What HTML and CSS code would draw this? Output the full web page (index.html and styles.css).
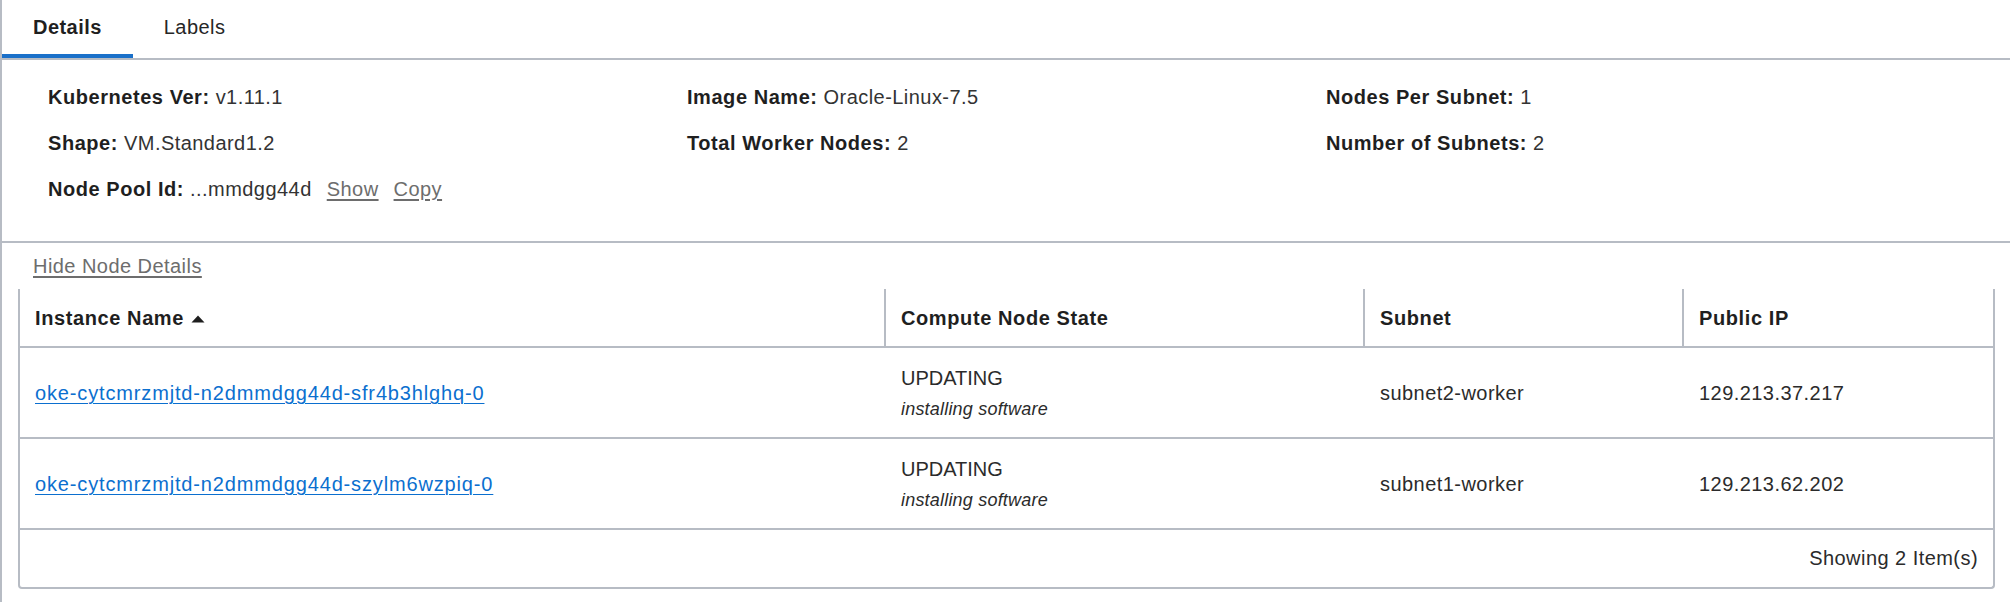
FILE: index.html
```html
<!DOCTYPE html>
<html lang="en">
<head>
<meta charset="utf-8">
<title>Node Pool Details</title>
<link rel="stylesheet" href="styles.css">
</head>
<body>
<div class="panel">
  <div class="tabs">
    <div class="tab tab-active">Details</div>
    <div class="tab">Labels</div>
  </div>

  <div class="details">
    <div class="field"><span class="label">Kubernetes Ver:</span> v1.11.1</div>
    <div class="field"><span class="label">Image Name:</span> Oracle-Linux-7.5</div>
    <div class="field"><span class="label">Nodes Per Subnet:</span> 1</div>
    <div class="field"><span class="label">Shape:</span> VM.Standard1.2</div>
    <div class="field"><span class="label">Total Worker Nodes:</span> 2</div>
    <div class="field"><span class="label">Number of Subnets:</span> 2</div>
    <div class="field"><span class="label">Node Pool Id:</span> ...mmdgg44d<a class="action" href="#">Show</a><a class="action" href="#">Copy</a></div>
  </div>

  <div class="nodes">
    <a class="toggle" href="#">Hide Node Details</a>
    <table class="grid">
      <colgroup>
        <col class="c1">
        <col class="c2">
        <col class="c3">
        <col class="c4">
      </colgroup>
      <thead>
        <tr>
          <th class="sep">Instance Name <svg class="sort" width="14" height="8" viewBox="0 0 14 8"><path d="M7 0.5 L13.5 7.5 L0.5 7.5 Z" fill="#1e1e1e"/></svg></th>
          <th class="sep">Compute Node State</th>
          <th class="sep">Subnet</th>
          <th>Public IP</th>
        </tr>
      </thead>
      <tbody>
        <tr>
          <td><a class="link" href="#">oke-cytcmrzmjtd-n2dmmdgg44d-sfr4b3hlghq-0</a></td>
          <td><div class="state">UPDATING</div><div class="substate">installing software</div></td>
          <td>subnet2-worker</td>
          <td>129.213.37.217</td>
        </tr>
        <tr>
          <td><a class="link" href="#">oke-cytcmrzmjtd-n2dmmdgg44d-szylm6wzpiq-0</a></td>
          <td><div class="state">UPDATING</div><div class="substate">installing software</div></td>
          <td>subnet1-worker</td>
          <td>129.213.62.202</td>
        </tr>
      </tbody>
      <tfoot>
        <tr>
          <td colspan="4" class="footer">Showing 2 Item(s)</td>
        </tr>
      </tfoot>
    </table>
  </div>
</div>
</body>
</html>
```

FILE: styles.css
```css
* {
  box-sizing: border-box;
}

html, body {
  margin: 0;
  padding: 0;
  background: #ffffff;
}

body {
  font-family: "Liberation Sans", Arial, Helvetica, sans-serif;
  font-size: 20px;
  letter-spacing: 0.45px;
  color: #2b2b2b;
}

.panel {
  border-left: 2px solid #b7bcc4;
  min-height: 602px;
}

/* Tabs */
.tabs {
  display: flex;
  border-bottom: 2px solid #b7bcc4;
}

.tab {
  padding: 0 31px;
  line-height: 54px;
  border-bottom: 4px solid transparent;
  color: #262626;
}

.tab-active {
  font-weight: bold;
  border-bottom-color: #1a70c9;
  color: #1f1f1f;
}

/* Details grid */
.details {
  display: grid;
  grid-template-columns: repeat(3, 1fr);
  row-gap: 23px;
  padding: 26px 45px 40px 46px;
  line-height: 23px;
  border-bottom: 2px solid #b7bcc4;
  color: #333333;
}

.label {
  font-weight: bold;
  color: #1f1f1f;
  letter-spacing: 0.55px;
}

.action {
  margin-left: 15px;
  color: #6d6d6d;
  text-decoration: underline;
  text-decoration-thickness: 2px;
  text-underline-offset: 3px;
}

/* Nodes */
.nodes {
  padding: 12px 15px 0 16px;
}

.toggle {
  display: inline-block;
  margin-left: 15px;
  line-height: 23px;
  color: #6d6d6d;
  text-decoration: underline;
  text-decoration-thickness: 2px;
  text-underline-offset: 3px;
}

.grid {
  width: 100%;
  margin-top: 11px;
  table-layout: fixed;
  border-collapse: separate;
  border-spacing: 0;
  border-left: 2px solid #b7bcc4;
  border-right: 2px solid #b7bcc4;
  border-bottom: 2px solid #b7bcc4;
  border-radius: 0 0 4px 4px;
}

.c1 { width: 866px; }
.c2 { width: 479px; }
.c3 { width: 319px; }
.c4 { width: auto; }

.grid th {
  text-align: left;
  font-weight: bold;
  color: #1f1f1f;
  letter-spacing: 0.6px;
  padding: 18px 15px 16px;
  line-height: 23px;
  border-bottom: 2px solid #b7bcc4;
  white-space: nowrap;
}

.grid th.sep {
  border-right: 2px solid #b7bcc4;
}

.sort {
  margin-left: 1px;
  vertical-align: 2px;
}

.grid td {
  padding: 19px 15px 17px;
  line-height: 23px;
  vertical-align: middle;
  border-bottom: 2px solid #b7bcc4;
  color: #2b2b2b;
}

.link {
  color: #0b6fcf;
  letter-spacing: 0.85px;
  text-decoration: underline;
  text-decoration-thickness: 1px;
  text-underline-offset: 3px;
}

.state {
  line-height: 23px;
  letter-spacing: 0;
}

.substate {
  margin-top: 9px;
  font-size: 18px;
  font-style: italic;
  line-height: 21px;
  letter-spacing: 0.2px;
}

.grid td.footer {
  border-bottom: none;
  text-align: right;
  padding: 17px 15px;
}
```
